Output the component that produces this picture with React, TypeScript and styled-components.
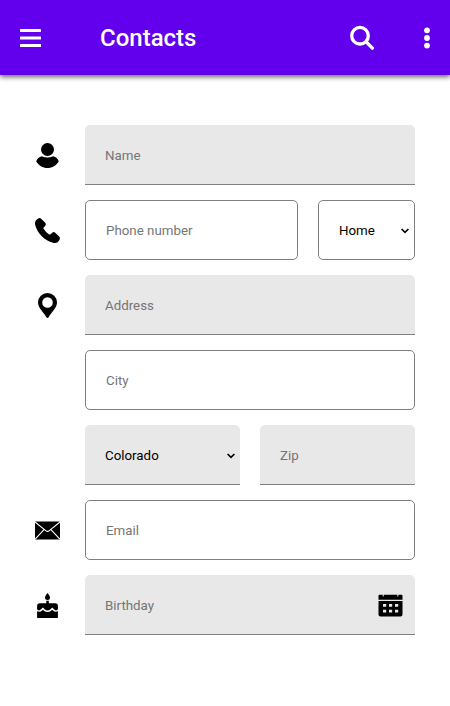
import React from "react";
import styled, { createGlobalStyle, css } from "styled-components";

const GlobalStyle = createGlobalStyle`
  *, *::before, *::after { box-sizing: border-box; }
  body { margin: 0; background: #fff; font-family: Roboto, "Liberation Sans", sans-serif; }
`;

const Header = styled.header`
  display: flex;
  align-items: center;
  height: 75px;
  padding: 0 20px;
  background: #6200ee;
  color: #fff;
  box-shadow: 0 2px 5px rgba(0, 0, 0, 0.6);
`;

const Title = styled.h1`
  flex: 1;
  margin: 0 0 0 59px;
  font-size: 24px;
  font-weight: 500;
  line-height: 28px;
`;

const IconButton = styled.button<{ $width: number }>`
  display: flex;
  flex: none;
  width: ${(p) => p.$width}px;
  padding: 0;
  border: 0;
  background: none;
  color: inherit;
`;

const Actions = styled.div`
  display: flex;
  align-items: center;
  gap: 49px;
`;

const Form = styled.form`
  display: flex;
  flex-direction: column;
  gap: 15px;
  padding: 50px 35px 0;
`;

const Row = styled.div`
  display: grid;
  grid-template-columns: 25px 1fr;
  column-gap: 25px;
  align-items: center;
  height: 60px;
`;

const Fields = styled.div<{ $columns?: string }>`
  display: grid;
  grid-template-columns: ${(p) => p.$columns ?? "1fr"};
  column-gap: 20px;
`;

type Variant = "filled" | "outlined";

const fieldStyle = css<{ $variant: Variant }>`
  width: 100%;
  min-width: 0;
  height: 60px;
  margin: 0;
  font-family: inherit;
  font-size: 13.3333px;
  outline: none;
  ${(p) =>
    p.$variant === "filled"
      ? css`
          padding: 1px 20px 0;
          border: 0;
          border-bottom: 1px solid #808080;
          border-radius: 5px 5px 0 0;
          background-color: #e8e8e8;
        `
      : css`
          padding: 0 20px;
          border: 1px solid #808080;
          border-radius: 5px;
          background-color: #fff;
        `}
`;

const Input = styled.input<{ $variant: Variant }>`
  ${fieldStyle}
  &::placeholder { color: #757575; }
`;

const SelectBox = styled.div`
  display: grid;
  align-items: center;
  > * { grid-area: 1 / 1; }
`;

const Select = styled.select<{ $variant: Variant }>`
  ${fieldStyle}
  appearance: none;
  color: #000;
`;

const Chevron = styled.svg<{ $variant: Variant }>`
  justify-self: end;
  width: 8px;
  height: 6px;
  margin-right: ${(p) => (p.$variant === "filled" ? 5 : 6)}px;
  margin-top: 1px;
  fill: none;
  stroke: #000;
  stroke-width: 1.6;
  pointer-events: none;
`;

const DateField = styled.div`
  display: flex;
  align-items: center;
  height: 60px;
  padding: 1px 12px 0 0;
  border-bottom: 1px solid #808080;
  border-radius: 5px 5px 0 0;
  background: #e8e8e8;
`;

const DateInput = styled.input`
  flex: 1;
  min-width: 0;
  padding: 0 0 0 20px;
  border: 0;
  outline: none;
  background: none;
  font-family: inherit;
  font-size: 13.3333px;
  &::placeholder { color: #757575; }
`;

const Icon = styled.svg`
  display: block;
  width: 25px;
  height: 25px;
  fill: currentColor;
`;

const MenuIcon = styled(Icon)`
  width: 21px;
  height: 19px;
`;

const MoreIcon = styled(Icon)`
  width: 6px;
  height: 23px;
`;

function SelectField({ variant, label, options }: { variant: Variant; label: string; options: string[] }) {
  return (
    <SelectBox>
      <Select $variant={variant} aria-label={label}>
        {options.map((o) => (
          <option key={o}>{o}</option>
        ))}
      </Select>
      <Chevron $variant={variant} viewBox="0 0 8 6">
        <path d="M.6 1 4 4.4 7.4 1" />
      </Chevron>
    </SelectBox>
  );
}

export default function App() {
  return (
    <>
      <GlobalStyle />
      <Header>
        <IconButton $width={21} aria-label="Menu">
          <MenuIcon viewBox="0 0 21 19">
            <rect y="1" width="21" height="3" rx="0.5" />
            <rect y="8.5" width="21" height="3" rx="0.5" />
            <rect y="16" width="21" height="3" rx="0.5" />
          </MenuIcon>
        </IconButton>
        <Title>Contacts</Title>
        <Actions>
          <IconButton $width={25} aria-label="Search">
            <Icon viewBox="0 0 25 25">
              <circle cx="10" cy="10.7" r="8.3" fill="none" stroke="currentColor" strokeWidth="3.3" />
              <path d="m16.4 17.1 6 6" stroke="currentColor" strokeWidth="3.4" strokeLinecap="round" />
            </Icon>
          </IconButton>
          <IconButton $width={6} aria-label="More">
            <MoreIcon viewBox="0 0 6 23">
              <circle cx="3" cy="4.3" r="2.9" />
              <circle cx="3" cy="12" r="2.9" />
              <circle cx="3" cy="19.6" r="2.9" />
            </MoreIcon>
          </IconButton>
        </Actions>
      </Header>
      <Form>
        <Row>
          <Icon viewBox="0 0 25 25">
            <circle cx="12.5" cy="6.5" r="6.5" />
            <path d="M6.8 13.2Q12.5 16 18.2 13.2C21 13.8 22.8 15.6 23.8 18.2C21.5 22.2 17.3 25 12.5 25S3.5 22.2 1.2 18.2C2.2 15.6 4 13.8 6.8 13.2Z" />
          </Icon>
          <Fields>
            <Input $variant="filled" placeholder="Name" />
          </Fields>
        </Row>
        <Row>
          <Icon viewBox="0 0 25 25">
            <path d="M2.1 1.2 3.2.5Q5-.5 6.4.9L10.2 4.8Q11.6 6.4 10.1 8L8.7 9.4Q8.2 10 8.6 10.8Q10.6 14.4 14.2 16.4Q15 16.8 15.6 16.3L17 14.9Q18.6 13.4 20.2 14.8L24.1 18.6Q25.5 20 24.5 21.8L23.8 22.9Q21.8 25.7 18 24.8C9.8 22.7 2.3 15.2.2 7Q-.7 3.2 2.1 1.2Z" />
          </Icon>
          <Fields $columns="213px 97px">
            <Input $variant="outlined" placeholder="Phone number" />
            <SelectField variant="outlined" label="Phone type" options={["Home", "Work"]} />
          </Fields>
        </Row>
        <Row>
          <Icon viewBox="0 0 25 25">
            <path fillRule="evenodd" d="M12.5 0A9.5 9.5 0 0 0 3 9.5C3 14.5 8.2 18.8 11.2 24Q12.5 26 13.8 24C16.8 18.8 22 14.5 22 9.5A9.5 9.5 0 0 0 12.5 0ZM12.5 4.2a5.3 5.3 0 1 1 0 10.6 5.3 5.3 0 0 1 0-10.6Z" />
          </Icon>
          <Fields>
            <Input $variant="filled" placeholder="Address" />
          </Fields>
        </Row>
        <Row>
          <span />
          <Fields>
            <Input $variant="outlined" placeholder="City" />
          </Fields>
        </Row>
        <Row>
          <span />
          <Fields $columns="1fr 1fr">
            <SelectField variant="filled" label="State" options={["Colorado", "Utah"]} />
            <Input $variant="filled" placeholder="Zip" />
          </Fields>
        </Row>
        <Row>
          <Icon viewBox="0 0 25 25">
            <rect y="3.5" width="25" height="18" rx="0.7" />
            <path d="m0 4 10.7 8.6q1.8 1.5 3.6 0L25 4M.2 21l8.6-9.2M24.8 21l-8.6-9.2" fill="none" stroke="#fff" strokeWidth="1.1" />
          </Icon>
          <Fields>
            <Input $variant="outlined" placeholder="Email" />
          </Fields>
        </Row>
        <Row>
          <Icon viewBox="0 0 25 25">
            <path d="M12.5 0C14 2 15 3.2 15 4.4a2.5 2.5 0 0 1-5 0C10 3.2 11 2 12.5 0ZM11.3 7.8h2.5v2.4h6.3q2.8 0 2.8 2.8v3.6q-2.1 1.8-4.2-.5l-1.5-1.6-2 2q-2.7 2.2-5.3 0l-2-2-1.6 1.6q-2.1 2.3-4.2.5V13q0-2.8 2.8-2.8h6.4ZM2.1 18.3q2.8 1.2 5-.8l.8-.8.8.8q3.8 3.1 7.7 0l.8-.8.8.8q2.1 2 4.9.8V25H2.1Z" />
          </Icon>
          <Fields>
            <DateField>
              <DateInput placeholder="Birthday" />
              <Icon viewBox="0 0 25 25">
                <path d="M.5 2.8q0-1 1-1h22q1 0 1 1v3.9H.5ZM.5 8h24v13.6q0 2-2 2H2.5q-2 0-2-2Z" />
                <path d="M5 11h3.2v2.8H5zM11 11h3.2v2.8H11zM17 11h3.2v2.8H17zM5 16.7h3.2v2.8H5zM11 16.7h3.2v2.8H11zM17 16.7h3.2v2.8H17zM4.7 1h1v2.5h-1zM19.3 1h1v2.5h-1z" fill="#e8e8e8" />
              </Icon>
            </DateField>
          </Fields>
        </Row>
      </Form>
    </>
  );
}
